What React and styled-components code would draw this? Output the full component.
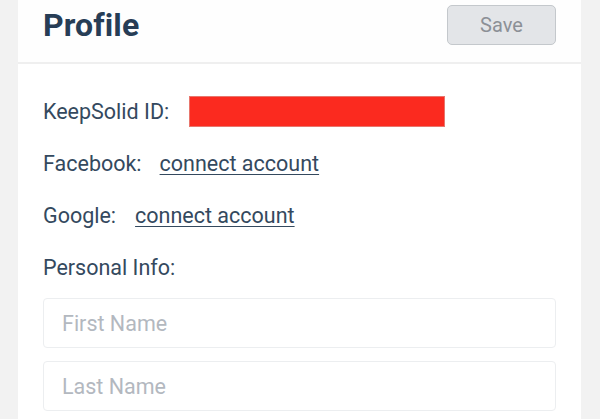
import React from 'react';
import styled, { createGlobalStyle } from 'styled-components';

const GlobalStyle = createGlobalStyle`
  html, body {
    margin: 0;
    padding: 0;
    background: #f2f2f2;
    font-family: Roboto, "Liberation Sans", Arial, sans-serif;
  }
`;

const Page = styled.div`
  padding: 0 19px 0 18px;
  height: 419px;
  overflow: hidden;
`;

const Panel = styled.div`
  background: #fff;
  min-height: 100%;
`;

const Header = styled.div`
  display: flex;
  align-items: center;
  justify-content: space-between;
  height: 64px;
  padding: 0 25px 12px 25px;
  box-sizing: border-box;
  background: #fefefe;
  border-bottom: 2px solid #efefef;
`;

const Title = styled.h1`
  margin: 0;
  font-size: 32px;
  font-weight: 700;
  color: #273d56;
  letter-spacing: 0.1px;
`;

const SaveButton = styled.button`
  width: 109px;
  height: 40px;
  border: 1px solid #c4c8cc;
  border-radius: 5px;
  background: #e3e5e8;
  color: #8c9096;
  font-family: inherit;
  font-size: 20px;
`;

const Body = styled.div`
  padding: 31px 25px 0 25px;
  display: flex;
  flex-direction: column;
`;

const Row = styled.div`
  display: flex;
  align-items: center;
  height: 32px;
  margin-bottom: ${p => p.after ?? 20}px;
  gap: ${p => p.spacing || 19}px;
`;

const Label = styled.span`
  font-size: 21.5px;
  color: #34495e;
`;

const Redacted = styled.div`
  width: 256px;
  height: 31px;
  background: #fb2a1f;
  border: 1px solid #e8766d;
  box-sizing: border-box;
`;

const Link = styled.a`
  font-size: 21.5px;
  color: #34495e;
  text-decoration: underline;
  text-underline-offset: 3px;
  text-decoration-thickness: 1px;
  cursor: pointer;
`;

const Input = styled.input`
  display: block;
  width: 100%;
  height: 50px;
  box-sizing: border-box;
  border: 1px solid #eceef0;
  border-radius: 4px;
  padding: 0 18px;
  font-family: inherit;
  font-size: 21.5px;
  color: #34495e;
  margin-bottom: 13px;
  outline: none;
  &::placeholder {
    color: #b3b8bf;
  }
`;

export default function App() {
  return (
    <>
      <GlobalStyle />
      <Page>
        <Panel>
          <Header>
            <Title>Profile</Title>
            <SaveButton>Save</SaveButton>
          </Header>
          <Body>
            <Row spacing={20}>
              <Label>KeepSolid ID:</Label>
              <Redacted />
            </Row>
            <Row spacing={18}>
              <Label>Facebook:</Label>
              <Link>connect account</Link>
            </Row>
            <Row>
              <Label>Google:</Label>
              <Link>connect account</Link>
            </Row>
            <Row after={15}>
              <Label>Personal Info:</Label>
            </Row>
            <Input placeholder="First Name" />
            <Input placeholder="Last Name" />
          </Body>
        </Panel>
      </Page>
    </>
  );
}
